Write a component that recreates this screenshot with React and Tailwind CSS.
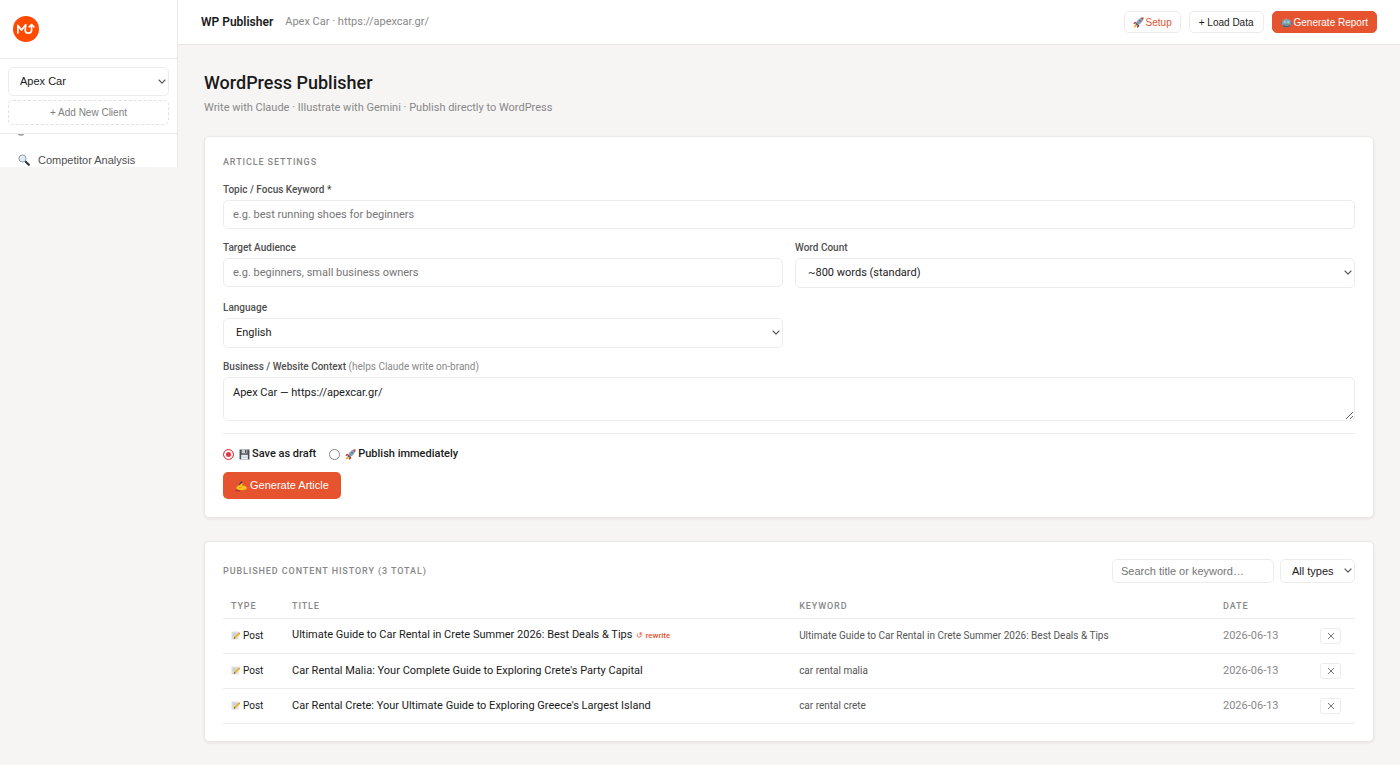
import { useState } from 'react'

const POSTS = [
  {
    id: 1, type: 'Post', rewrite: true, date: '2026-06-13',
    title: 'Ultimate Guide to Car Rental in Crete Summer 2026: Best Deals & Tips',
    keyword: 'Ultimate Guide to Car Rental in Crete Summer 2026: Best Deals & Tips',
  },
  {
    id: 2, type: 'Post', date: '2026-06-13',
    title: "Car Rental Malia: Your Complete Guide to Exploring Crete's Party Capital",
    keyword: 'car rental malia',
  },
  {
    id: 3, type: 'Post', date: '2026-06-13',
    title: "Car Rental Crete: Your Ultimate Guide to Exploring Greece's Largest Island",
    keyword: 'car rental crete',
  },
]

const sans = "font-['Roboto',sans-serif]"
const arial = "font-['Liberation_Sans',sans-serif]"
const card = 'bg-white border border-[#ebe8e8] rounded-[5px] shadow-[0_1px_3px_rgba(0,0,0,0.07)]'
const field = 'block bg-white border border-[#eeebeb] rounded-[5px] text-[11px] text-[#1a1a1a] placeholder:text-[#757575] outline-none'
const labelCls = 'block mb-1 text-[10px] leading-3 font-medium text-[#505050]'
const caps = 'text-[9px] leading-3 tracking-[0.1em] font-medium text-[#888] uppercase'

function Logo() {
  return (
    <svg viewBox="0 0 26 26" className="w-[26px] h-[26px]" fill="none" aria-label="Logo">
      <circle cx="13" cy="13" r="13" fill="#ff4a00" />
      <g stroke="#fff" strokeWidth="1.7" strokeLinecap="round" strokeLinejoin="round">
        <path d="M4.900 17V9.400l3.600 4.600 4.200-5.200" />
        <path d="M12.700 9.200L12.200 14c0 2 1.400 3.200 3.200 3.200s3.200-1.200 3.200-3.200V9.200" />
        <path d="M16.300 10.800l2.300-2.200 2.300 2.200" />
      </g>
    </svg>
  )
}

function Rocket() {
  return (
    <svg viewBox="0 0 20 20" className="w-[11px] h-[11px] shrink-0" aria-hidden="true">
      <path d="M6 8.500 1.500 10l-.5 3 4-1z" fill="#c8343a" />
      <path d="M11.500 14 10 18.500l-3 .5 1-4z" fill="#8f2730" />
      <path d="M5 13c-2 .6-3 3-3.500 6 3-.5 5-1.500 5.500-3.500z" fill="#f6a623" />
      <path d="M19 1c-6 0-10 3-13.500 9.500l-.5 2.500 2 2 2.500-.5C16 11 19 7 19 1z" fill="#8d9aa6" />
      <path d="M19 1c-1.500 0-3 .2-4.400.7l3.700 3.700C18.800 4 19 2.500 19 1z" fill="#d9363e" />
      <path d="M5.500 10.500 5 13l2 2 2.500-.5z" fill="#4a5560" />
      <circle cx="12.800" cy="7.200" r="2.100" fill="#1d4f7c" stroke="#dde5ea" strokeWidth=".8" />
    </svg>
  )
}

function Robot() {
  return (
    <svg viewBox="0 0 20 20" className="w-[11px] h-[11px] shrink-0" aria-hidden="true">
      <path d="M10 1v4" stroke="#8fa3ad" strokeWidth="1.500" />
      <circle cx="10" cy="1.800" r="1.500" fill="#c9656a" />
      <rect x="0" y="8" width="3" height="6" rx="1.500" fill="#5b7482" />
      <rect x="17" y="8" width="3" height="6" rx="1.500" fill="#5b7482" />
      <path d="M3 5.500C5 3.500 15 3.500 17 5.500c1.200 4 1.200 8-.8 11.500-2 2.300-10.400 2.300-12.400 0C1.800 13.500 1.800 9.500 3 5.500z" fill="#7fa9b5" />
      <path d="M3.800 14h12.400v3c-2 2.300-10.400 2.300-12.400 0z" fill="#4b616c" />
      <circle cx="7" cy="9" r="1.700" fill="#a9d3d8" />
      <circle cx="13" cy="9" r="1.700" fill="#a9d3d8" />
      <path d="M6 15.500h8" stroke="#7f97a2" strokeWidth="1.500" />
    </svg>
  )
}

function Floppy() {
  return (
    <svg viewBox="0 0 20 20" className="w-[11px] h-[11px] shrink-0" aria-hidden="true">
      <path d="M1 1h18v18H2.500L1 17.500z" fill="#4a5058" />
      <rect x="5" y="1" width="10" height="7" fill="#c9ced4" />
      <rect x="11" y="2" width="2.500" height="5" fill="#3d434b" />
      <rect x="4" y="10.500" width="12" height="8.500" fill="#f1f3f5" />
      <path d="M5.500 13h9M5.500 15.500h9" stroke="#a9c0d6" />
    </svg>
  )
}

function WritingHand() {
  return (
    <svg viewBox="0 0 20 20" className="w-3 h-3 shrink-0" aria-hidden="true">
      <path d="M1.500 15 10.500 2l2.200 1.300L4 15.500z" fill="#3f3a3a" />
      <path d="M2 13c1-2.500 3.500-4 6-4.500l3-3c1.200-.8 2.300.3 1.700 1.500L11.500 9l4.500.5 3.500 2v4L14 16.500l-6 .5c-1.500 0-1.500-1-.8-1.500C4.500 16 1.500 15 2 13z" fill="#fcc21b" />
      <path d="M6.500 12.500c2 .4 4 0 5.500-.8" stroke="#c77f0c" fill="none" />
      <path d="M1 18h8" stroke="#5a3a28" strokeWidth="1.200" />
    </svg>
  )
}

function Memo() {
  return (
    <svg viewBox="0 0 20 20" className="w-[9px] h-[9px] shrink-0" aria-hidden="true">
      <rect x="1" y="1" width="16" height="18" fill="#dfe2e5" />
      <path d="M3.500 5h9M3.500 8h8M3.500 11h5" stroke="#b3bfc8" strokeWidth="1.200" />
      <path d="M6 17l1-4.500L16.500 4l3 3L10 16z" fill="#e8b62c" />
      <path d="M16.500 4l1.200-1 2.300 2.500-.5 1.500z" fill="#d9534f" />
      <path d="M6 17l1-4.500L10 16z" fill="#6b5a3a" />
    </svg>
  )
}

function Magnifier() {
  return (
    <svg viewBox="0 0 20 20" className="w-3 h-3 shrink-0" aria-hidden="true">
      <path d="M12 12l6 6" stroke="#2e2e2e" strokeWidth="3.400" strokeLinecap="round" />
      <circle cx="7.500" cy="7.500" r="6" fill="#dcebf3" stroke="#8b9298" strokeWidth="1.500" />
      <path d="M4.500 7c.3-1.800 1.500-2.700 3-2.800" stroke="#fff" strokeWidth="1.200" fill="none" />
    </svg>
  )
}

function Ring() {
  return (
    <svg viewBox="0 0 20 20" className="w-3 h-3 shrink-0" fill="none" aria-hidden="true">
      <circle cx="5" cy="14" r="4.500" stroke="#9a9a9a" strokeWidth="2.500" />
      <path d="M8 10l8-8" stroke="#9a9a9a" strokeWidth="2.500" />
    </svg>
  )
}

const NAV = [
  { id: 'keywords', Icon: Ring },
  { id: 'competitors', Icon: Magnifier, label: 'Competitor Analysis' },
]

function Select({ className = '', children, ...props }) {
  return (
    <div className="relative">
      <select {...props} className={`appearance-none ${className}`}>{children}</select>
      <svg viewBox="0 0 8 6" className="absolute top-1/2 right-[3px] -translate-y-1/2 w-2 h-[6px] pointer-events-none" fill="none">
        <path d="M1 1l3 3.200L7 1" stroke="#555" strokeWidth="1.100" strokeLinecap="round" strokeLinejoin="round" />
      </svg>
    </div>
  )
}

function Sidebar() {
  return (
    <aside className={`w-[178px] shrink-0 self-start bg-white border-r border-[#ebe8e8] ${arial}`}>
      <div className="h-[59px] px-[13px] flex items-center border-b border-[#ebe8e8]">
        <Logo />
      </div>
      <div className="p-2 border-b border-[#ebe8e8]">
        <Select aria-label="Client" className={`${field} w-full h-[29px] pl-[11px] pr-5`}>
          <option>Apex Car</option>
        </Select>
        <button className="mt-1 w-full h-[25px] border border-dashed border-[#e4e0e0] rounded-[5px] text-[10px] text-[#808080]">
          + Add New Client
        </button>
      </div>
      <nav className="h-[33px] overflow-hidden flex flex-col justify-end">
        {NAV.map(({ id, Icon, label }) => (
          <a key={id} href={`#${id}`} className="shrink-0 h-[30px] last:-mb-2 pl-[18px] flex items-center gap-2 text-[11px] text-[#505050]">
            <Icon />{label}
          </a>
        ))}
      </nav>
    </aside>
  )
}

function Header() {
  const btn = 'h-[22px] flex items-center gap-[2px] rounded-[5px] border text-[10px] whitespace-nowrap'
  return (
    <header className="h-[45px] px-[23px] flex items-center bg-white border-b border-[#e8e5e5]">
      <span className="text-[12px] leading-[18px] font-semibold text-[#1a1a1a]">WP Publisher</span>
      <span className="ml-3 text-[11px] leading-[18px] text-[#888]">Apex Car · https://apexcar.gr/</span>
      <div className={`ml-auto flex gap-2 ${arial}`}>
        <button className={`${btn} px-2 border-[#eeebeb] text-[#e5532f]`}><Rocket />Setup</button>
        <button className={`${btn} px-[9px] border-[#eeebeb] text-[#1a1a1a]`}>+ Load Data</button>
        <button className={`${btn} px-2 border-[#e5532f] bg-[#e5532f] text-white`}><Robot />Generate Report</button>
      </div>
    </header>
  )
}

function ArticleSettings() {
  const [mode, setMode] = useState('draft')
  const radio = 'appearance-none w-[11px] h-[11px] mr-[5px] rounded-full border border-[#858585] checked:border-[#e5434b] checked:bg-[#e5333b] checked:shadow-[inset_0_0_0_2px_#fff]'

  return (
    <section className={`px-[18px] pt-[19px] pb-[18px] ${card}`}>
      <h2 className={`${caps} mb-4`}>Article Settings</h2>

      <label htmlFor="topic" className={labelCls}>Topic / Focus Keyword *</label>
      <input id="topic" placeholder="e.g. best running shoes for beginners" className={`${field} w-full h-[29px] px-[9px]`} />

      <div className="mt-[13px] grid grid-cols-2 gap-x-3 gap-y-[14px]">
        <div>
          <label htmlFor="audience" className={labelCls}>Target Audience</label>
          <input id="audience" placeholder="e.g. beginners, small business owners" className={`${field} w-full h-[29px] px-[9px]`} />
        </div>
        <div>
          <label htmlFor="words" className={labelCls}>Word Count</label>
          <Select id="words" className={`${field} w-full h-[30px] pl-3 pr-5`}>
            <option>~800 words (standard)</option>
          </Select>
        </div>
        <div>
          <label htmlFor="language" className={labelCls}>Language</label>
          <Select id="language" className={`${field} w-full h-[30px] pl-3 pr-5`}>
            <option>English</option>
          </Select>
        </div>
      </div>

      <label htmlFor="context" className={`${labelCls} mt-[13px]`}>
        Business / Website Context <span className="font-normal text-[#888]">(helps Claude write on-brand)</span>
      </label>
      <textarea id="context" defaultValue="Apex Car — https://apexcar.gr/"
        className={`${field} w-full h-[44px] px-[9px] py-[6px] leading-[18px] resize-y`} />

      <div className="mt-3 pt-3 border-t border-[#eeebeb] flex gap-[13px] text-[11px] leading-4 font-medium text-[#1a1a1a]">
        <label className="flex items-center">
          <input type="radio" name="mode" className={radio} checked={mode === 'draft'} onChange={() => setMode('draft')} />
          <Floppy /><span className="ml-[2px]">Save as draft</span>
        </label>
        <label className="flex items-center">
          <input type="radio" name="mode" className={radio} checked={mode === 'publish'} onChange={() => setMode('publish')} />
          <Rocket /><span className="ml-[2px]">Publish immediately</span>
        </label>
      </div>

      <button className={`mt-[10px] h-[27px] px-3 flex items-center gap-[3px] rounded-[5px] bg-[#e5532f] text-white text-[11px] ${arial}`}>
        <WritingHand />Generate Article
      </button>
    </section>
  )
}

function History() {
  const [query, setQuery] = useState('')
  const rows = POSTS.filter((p) => `${p.title} ${p.keyword}`.toLowerCase().includes(query.toLowerCase()))
  const th = `${caps} px-2 pt-[2px] text-left align-middle`

  return (
    <section className={`mt-[23px] px-[18px] py-[17px] ${card}`}>
      <div className="flex items-center">
        <h2 className={caps}>Published Content History (3 total)</h2>
        <div className={`ml-auto flex gap-[6px] ${arial}`}>
          <input aria-label="Search" placeholder="Search title or keyword…" value={query} onChange={(e) => setQuery(e.target.value)}
            className={`${field} h-6 w-[162px] px-2`} />
          <Select aria-label="Type" className={`${field} h-6 w-[75px] pl-[11px]`}>
            <option>All types</option>
          </Select>
        </div>
      </div>

      <table className="mt-[10px] w-full table-fixed border-collapse text-[10px]">
        <thead>
          <tr className="h-[25px] border-b border-[#eeebeb]">
            <th className={`${th} w-[61px]`}>Type</th>
            <th className={`${th} w-[44.8%]`}>Title</th>
            <th className={th}>Keyword</th>
            <th className={`${th} w-[97px]`}>Date</th>
            <th className="w-[43px]"></th>
          </tr>
        </thead>
        <tbody>
          {rows.map((p) => (
            <tr key={p.id} className="h-[35px] border-b border-[#eeebeb]">
              <td className="px-2"><span className="flex items-center gap-[3px] text-[#1a1a1a]"><Memo />{p.type}</span></td>
              <td className="px-2 text-[11px] leading-[18px] text-[#1a1a1a] whitespace-nowrap">
                {p.title}
                {p.rewrite && <span className="ml-1 text-[8px] font-medium text-[#e5532f]">↺ rewrite</span>}
              </td>
              <td className="px-2 text-[#555]">{p.keyword}</td>
              <td className="px-2 text-[11px] leading-[18px] text-[#888]">{p.date}</td>
              <td className="px-2">
                <button aria-label="Delete" className="w-[21px] h-4 flex items-center justify-center border border-[#eeebeb] rounded-[3px]">
                  <svg viewBox="0 0 8 8" className="w-2 h-2"><path d="M1 1l6 6M7 1L1 7" stroke="#777" strokeWidth="1" /></svg>
                </button>
              </td>
            </tr>
          ))}
        </tbody>
      </table>
    </section>
  )
}

export default function App() {
  return (
    <div className={`min-h-screen flex bg-[#f6f5f4] ${sans}`}>
      <Sidebar />
      <div className="flex-1 min-w-0">
        <Header />
        <main className="px-[26px] pt-[26px] pb-6">
          <h1 className="text-[18px] leading-6 font-medium text-[#1a1a1a]">WordPress Publisher</h1>
          <p className="mt-[5px] mb-5 text-[11px] leading-4 text-[#888]">
            Write with Claude · Illustrate with Gemini · Publish directly to WordPress
          </p>
          <ArticleSettings />
          <History />
        </main>
      </div>
    </div>
  )
}
